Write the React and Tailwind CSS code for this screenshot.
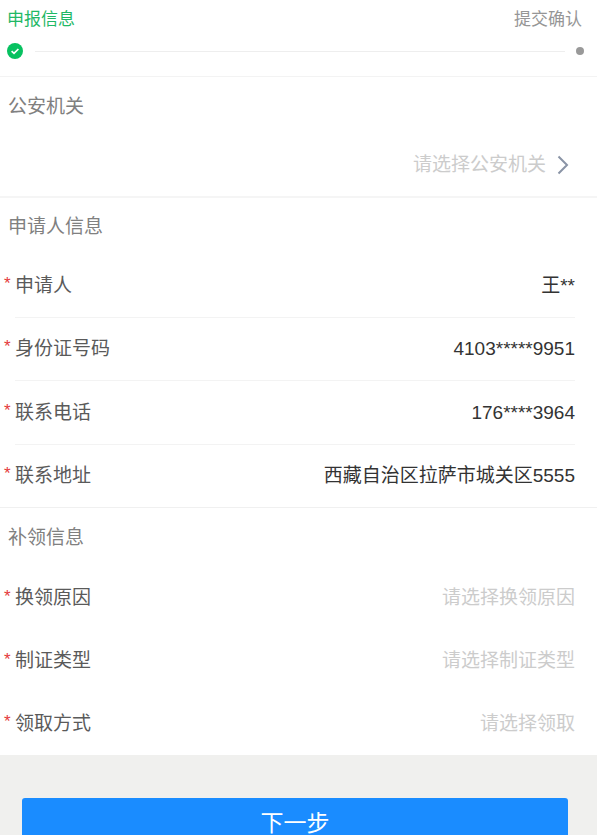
import React from "react";

const font = { fontFamily: '"Liberation Sans", "Noto Sans CJK SC", sans-serif' };

function Row({ label, value, placeholder, divider, h = "h-[63.5px]" }) {
  return (
    <div className={`relative flex ${h} items-center justify-between pl-[15px] pr-[22px] text-[19px]`}>
      <span className="absolute left-[4px] top-[calc(50%-12px)] text-[17px] leading-[20px] text-[#e4393c]">*</span>
      <span className="text-[#5a5a5a]">{label}</span>
      <span className={placeholder ? "text-[#cccccc]" : "text-[#333333]"}>{value || placeholder}</span>
      {divider && <div className="absolute bottom-0 left-[15px] right-[22px] h-px bg-[#f3f3f3]" />}
    </div>
  );
}

function Title({ children, h, className = "" }) {
  return <div className={`flex items-center text-[19px] text-[#808080] ${h} ${className}`}>{children}</div>;
}

export default function App() {
  return (
    <div style={font} className="flex h-[835px] w-[597px] flex-col overflow-hidden bg-[#f0f0ee]">
      <div className="bg-white">
        <div className="border-b border-[#f3f3f3]">
          <div className="flex h-[38px] items-center justify-between pl-[7px] pr-[15px] pt-[2px] text-[17px]">
            <span className="text-[#1fb866]">申报信息</span>
            <span className="text-[#969696]">提交确认</span>
          </div>
          <div className="flex h-[38px] items-start pl-[7px] pr-[13px] pt-[5px]">
            <svg width="16" height="16" viewBox="0 0 16 16" className="shrink-0">
              <circle cx="8" cy="8" r="8" fill="#07c160" />
              <path d="M4.6 8.2 7 10.4 11.4 6" fill="none" stroke="#fff" strokeWidth="1.7" />
            </svg>
            <div className="ml-[12px] mt-[8px] h-px flex-1 bg-[#eeeeee]" />
            <div className="ml-[11px] mt-[4px] h-[8px] w-[8px] rounded-full bg-[#999999]" />
          </div>
        </div>

        <div className="border-b-2 border-[#f5f5f5]">
          <Title h="h-[59px]" className="pl-[8px] pt-[2px]">公安机关</Title>
          <div className="flex h-[60px] items-center justify-end pb-[2px] pr-[27px] text-[19px] text-[#cccccc]">
            <span>请选择公安机关</span>
            <svg width="14" height="20" viewBox="0 0 14 20" className="ml-[10px]">
              <path d="M2.5 1.5 11 10 2.5 18.5" fill="none" stroke="#8a94a6" strokeWidth="2" />
            </svg>
          </div>
        </div>

        <div className="border-b border-[#f0f0f0]">
          <Title h="h-[56px]" className="pl-[8px] pt-[3px]">申请人信息</Title>
          <Row label="申请人" value="王**" divider />
          <Row label="身份证号码" value="4103*****9951" divider />
          <Row label="联系电话" value="176****3964" divider />
          <Row label="联系地址" value="西藏自治区拉萨市城关区5555" h="h-[62.5px]" />
        </div>

        <div>
          <Title h="h-[59px]" className="pl-[8px] pt-[2px]">补领信息</Title>
          <Row label="换领原因" placeholder="请选择换领原因" h="h-[63px]" />
          <Row label="制证类型" placeholder="请选择制证类型" h="h-[63px]" />
          <Row label="领取方式" placeholder="请选择领取" h="h-[61.5px]" />
        </div>
      </div>

      <div className="min-h-0 flex-1 px-[22px] pt-[43px]">
        <button className="h-[52px] w-[546px] rounded-[3px] bg-[#1a8cff] text-[23px] text-white">下一步</button>
      </div>
    </div>
  );
}
